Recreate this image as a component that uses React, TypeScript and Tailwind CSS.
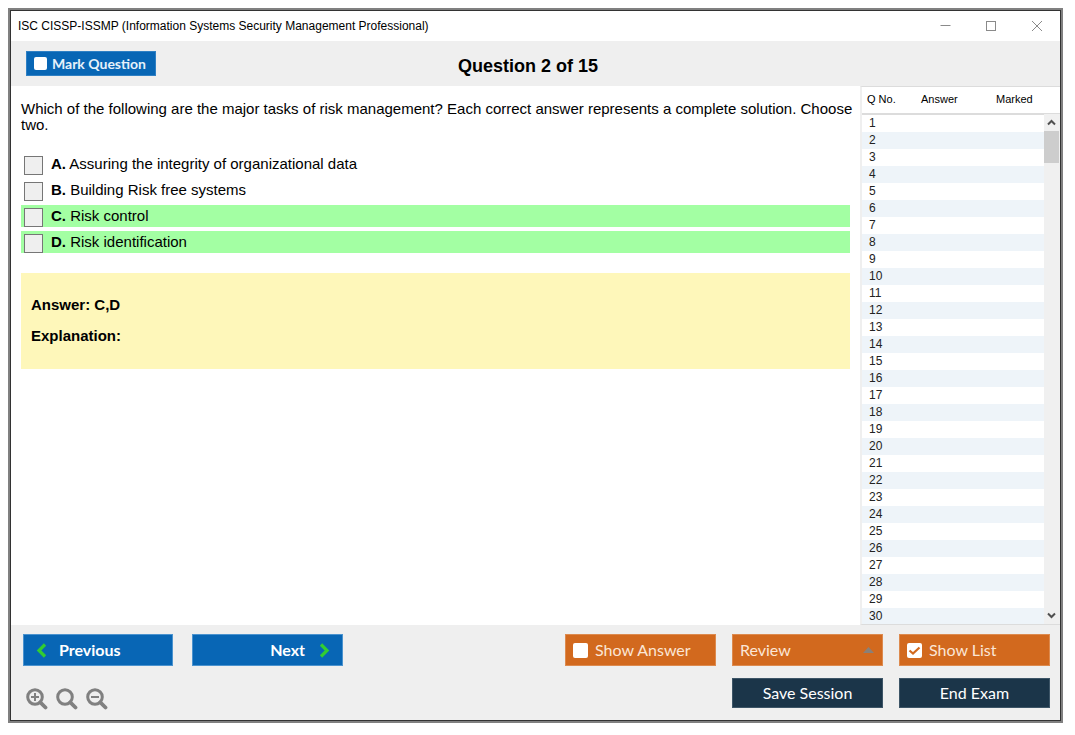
import { useState } from 'react'
import clsx from 'clsx'

type Choice = { letter: string; text: string; correct: boolean }

const CHOICES: Choice[] = [
  { letter: 'A', text: 'Assuring the integrity of organizational data', correct: false },
  { letter: 'B', text: 'Building Risk free systems', correct: false },
  { letter: 'C', text: 'Risk control', correct: true },
  { letter: 'D', text: 'Risk identification', correct: true },
]

const ROWS = Array.from({ length: 30 }, (_, i) => i + 1)

function TitleBar() {
  return (
    <header className="flex h-[30px] items-center justify-between bg-white pl-[7px]">
      <h1 className="text-[12px] leading-4">
        ISC CISSP-ISSMP (Information Systems Security Management Professional)
      </h1>
      <div className="flex h-full text-[#8a8a8a]">
        <button aria-label="Minimize" className="flex w-[46px] items-center justify-center">
          <svg width="11" height="11" viewBox="0 0 11 11" stroke="currentColor">
            <path d="M0.5 4.5H10.5" />
          </svg>
        </button>
        <button aria-label="Maximize" className="flex w-[46px] items-center justify-center">
          <svg width="11" height="11" viewBox="0 0 11 11" fill="none" stroke="currentColor">
            <rect x="0.5" y="0.5" width="9" height="9" />
          </svg>
        </button>
        <button aria-label="Close" className="flex w-[46px] items-center justify-center">
          <svg width="11" height="11" viewBox="0 0 11 11" stroke="currentColor">
            <path d="M0 0L10 10M10 0L0 10" />
          </svg>
        </button>
      </div>
    </header>
  )
}

function WhiteCheckbox({ id, size, defaultChecked }: { id: string; size: string; defaultChecked?: boolean }) {
  return (
    <span className={clsx('relative block shrink-0', size)}>
      <input
        id={id}
        type="checkbox"
        defaultChecked={defaultChecked}
        className="peer block size-full appearance-none rounded-xs bg-white"
      />
      <svg
        viewBox="0 0 15 15"
        fill="none"
        stroke="#d2691e"
        strokeWidth="2.2"
        className="pointer-events-none absolute inset-0 hidden size-full peer-checked:block"
      >
        <path d="M2.5 7.5L6 10.5L12.5 4.5" />
      </svg>
    </span>
  )
}

function QuestionList() {
  return (
    <aside className="relative w-[200px] shrink-0 overflow-hidden border-y border-l-2 border-[#dcdcdc] border-l-[#efefef] bg-white">
      {/* last row is cut off by the bottom edge */}
      <table className="-mb-px w-full table-fixed border-collapse text-left text-[11px] text-[#222]">
        <colgroup>
          <col className="w-[54px]" />
          <col className="w-[75px]" />
          <col />
        </colgroup>
        <thead>
          <tr className="h-[27px] border-b-2 border-[#dcdcdc] text-black">
            <th className="pb-px pl-[5px] font-normal">Q No.</th>
            <th className="pb-px pl-[5px] font-normal">Answer</th>
            <th className="pb-px pl-[5px] font-normal">Marked</th>
          </tr>
        </thead>
        <tbody>
          {ROWS.map((n) => (
            <tr key={n} className="h-[17px] even:bg-[#eef4f9]">
              <td className="pl-[7px] text-[12px] leading-[17px]">{n}</td>
              <td />
              <td />
            </tr>
          ))}
        </tbody>
      </table>

      {/* Scrollbar */}
      <div className="absolute top-[27px] right-0 bottom-0 flex w-4 flex-col bg-[#f0f0f0] pr-px text-[#505050]">
        <button aria-label="Scroll up" className="flex h-[17px] items-center justify-center">
          <svg width="9" height="7" viewBox="0 0 9 7" fill="none" stroke="currentColor" strokeWidth="2">
            <path d="M1 5.5L4.5 2L8 5.5" />
          </svg>
        </button>
        <div className="h-8 bg-[#cdcdcd]" />
        <button aria-label="Scroll down" className="mt-auto flex h-[17px] items-center justify-center">
          <svg width="9" height="7" viewBox="0 0 9 7" fill="none" stroke="currentColor" strokeWidth="2">
            <path d="M1 1.5L4.5 5L8 1.5" />
          </svg>
        </button>
      </div>
    </aside>
  )
}

function ZoomIcon({ sign }: { sign?: 'plus' | 'minus' }) {
  return (
    <svg width="22" height="22" viewBox="0 0 22 22" fill="none" stroke="currentColor">
      <circle cx="9" cy="9" r="7.3" strokeWidth="3" />
      <path d="M14.3 14.3L19.5 19.5" strokeWidth="3.8" strokeLinecap="round" />
      {sign && <path d="M5 9H13" strokeWidth="2" />}
      {sign === 'plus' && <path d="M9 5V13" strokeWidth="2" />}
    </svg>
  )
}

function Footer() {
  return (
    <footer className="flex items-start justify-between bg-[#efefef] pt-[9px] pr-[10px] pb-[10px] pl-3 font-[Lato,sans-serif] text-[16px]">
      <div className="flex flex-col gap-[22px]">
        <div className="flex gap-[19px] font-bold text-white">
          <button className="flex h-8 w-[150px] items-center gap-3 border border-[#4b93cf] bg-[#0866b5] pl-3">
            <svg width="11" height="15" viewBox="0 0 11 15" fill="none" stroke="#32cd32" strokeWidth="3.2">
              <path d="M9 1.5L3 7.5L9 13.5" />
            </svg>
            Previous
          </button>
          <button className="flex h-8 w-[151px] items-center justify-end gap-[14px] border border-[#4b93cf] bg-[#0866b5] pr-3">
            Next
            <svg width="11" height="15" viewBox="0 0 11 15" fill="none" stroke="#32cd32" strokeWidth="3.2">
              <path d="M2 1.5L8 7.5L2 13.5" />
            </svg>
          </button>
        </div>
        <div className="flex gap-2 pl-[3px] text-[#808080]">
          <button aria-label="Zoom in"><ZoomIcon sign="plus" /></button>
          <button aria-label="Reset zoom"><ZoomIcon /></button>
          <button aria-label="Zoom out"><ZoomIcon sign="minus" /></button>
        </div>
      </div>

      <div className="grid grid-cols-[151px_151px_151px] gap-x-4 gap-y-3 text-white">
        <label
          htmlFor="show-answer"
          className="flex h-8 items-center gap-[7px] border border-[#dd8a4e] bg-[#d2691e] pl-[7px] text-[#fbe6d6]"
        >
          <WhiteCheckbox id="show-answer" size="size-[15px]" />
          Show Answer
        </label>
        <div className="relative">
          <select
            aria-label="Review"
            className="block h-8 w-full appearance-none border border-[#dd8a4e] bg-[#d2691e] pl-[7px] text-[#fbe6d6]"
          >
            <option>Review</option>
          </select>
          <svg width="11" height="6" viewBox="0 0 11 6" className="pointer-events-none absolute top-[13px] right-[9px]">
            <path d="M5.5 0L11 6H0Z" fill="#8a8078" />
          </svg>
        </div>
        <label
          htmlFor="show-list"
          className="flex h-8 items-center gap-[7px] border border-[#dd8a4e] bg-[#d2691e] pl-[7px] text-[#fbe6d6]"
        >
          <WhiteCheckbox id="show-list" size="size-[15px]" defaultChecked />
          Show List
        </label>
        <button className="col-start-2 h-[30px] border border-[#3d5567] bg-[#1b3549]">Save Session</button>
        <button className="h-[30px] border border-[#3d5567] bg-[#1b3549]">End Exam</button>
      </div>
    </footer>
  )
}

export default function App() {
  const [selected, setSelected] = useState<string[]>([])

  const toggle = (letter: string) =>
    setSelected((prev) => (prev.includes(letter) ? prev.filter((l) => l !== letter) : [...prev, letter]))

  return (
    <div className="flex min-h-screen bg-white pt-2 pr-3 pb-3 pl-2 font-['Liberation_Sans',Arial,sans-serif] text-black">
      <div className="flex min-w-0 flex-1 border-2 border-[#808080]">
        <div className="flex min-w-0 flex-1 flex-col border border-[#333]">
          <TitleBar />

          <div className="grid h-[45px] grid-cols-[1fr_auto_1fr] items-center bg-[#efefef] pr-[30px] pl-[15px]">
            <label
              htmlFor="mark-question"
              className="flex h-[25px] w-[130px] items-center gap-[5px] border border-[#2f80c4] bg-[#0866b5] pl-[7px] font-[Lato,sans-serif] text-[14px] font-bold text-[#e6f1fa]"
            >
              <WhiteCheckbox id="mark-question" size="size-[13px]" />
              Mark Question
            </label>
            <h2 className="mt-1 text-[18px] leading-6 font-bold">Question 2 of 15</h2>
          </div>

          <div className="flex flex-1">
            <main className="min-w-0 flex-1 px-[10px] pt-[15px] text-[15px] leading-4">
              <p className="-mr-[10px]">
                Which of the following are the major tasks of risk management? Each correct answer represents a complete
                solution. Choose two.
              </p>

              <ul className="mt-5 flex flex-col gap-1">
                {CHOICES.map(({ letter, text, correct }) => (
                  <li key={letter} className={clsx('flex h-[22px] pl-[3px]', correct && 'bg-[#a3ffa3]')}>
                    <input
                      id={`choice-${letter}`}
                      type="checkbox"
                      checked={selected.includes(letter)}
                      onChange={() => toggle(letter)}
                      className="mt-[3px] size-[19px] shrink-0 appearance-none border border-[#767676] bg-[#efefef] checked:bg-[#767676]"
                    />
                    <label htmlFor={`choice-${letter}`} className="pt-[3px] pl-2">
                      <b>{letter}.</b> {text}
                    </label>
                  </li>
                ))}
              </ul>

              <section className="mt-5 flex h-24 flex-col gap-[15px] bg-[#fef7ba] px-[10px] pt-6 font-bold">
                <p>Answer: C,D</p>
                <p>Explanation:</p>
              </section>
            </main>
            <QuestionList />
          </div>

          <Footer />
        </div>
      </div>
    </div>
  )
}
